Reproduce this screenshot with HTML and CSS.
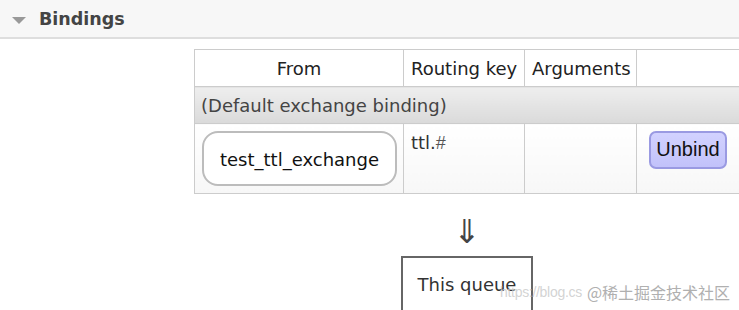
FILE: index.html
```html
<!DOCTYPE html>
<html>
<head>
<meta charset="utf-8">
<link rel="stylesheet" href="styles.css">
</head>
<body>
<div class="section-head">
  <span class="tri"></span>
  <h2 class="title">Bindings</h2>
</div>
<div class="content">
  <table class="bindings">
    <thead>
      <tr>
        <th class="c-from">From</th>
        <th class="c-key">Routing key</th>
        <th class="c-args">Arguments</th>
        <th class="c-act"></th>
      </tr>
    </thead>
    <tbody>
      <tr class="default-row">
        <td colspan="4">(Default exchange binding)</td>
      </tr>
      <tr class="data-row">
        <td class="c-from"><span class="pill">test_ttl_exchange</span></td>
        <td class="c-key">ttl.<span class="hash">#</span></td>
        <td class="c-args"></td>
        <td class="c-act"><button class="unbind">Unbind</button></td>
      </tr>
    </tbody>
  </table>
  <div class="flow">
    <div class="arrow">⇓</div>
    <div class="queue-box">This queue</div>
  </div>
</div>
<div class="watermark"><span class="wm-url">https://blog.cs</span><span class="wm-brand">@稀土掘金技术社区</span></div>
</body>
</html>
```
FILE: styles.css
```css
html, body {
  margin: 0;
  padding: 0;
  background: #fff;
  width: 739px;
  height: 310px;
  overflow: hidden;
  font-family: "DejaVu Sans", Verdana, sans-serif;
  color: #444;
}
body { position: relative; }

.section-head {
  display: flex;
  align-items: center;
  height: 37px;
  background: #f7f7f7;
  border-bottom: 2px solid #dedede;
  padding-left: 12px;
  gap: 13px;
}
.tri {
  width: 0;
  height: 0;
  border-left: 7px solid transparent;
  border-right: 7px solid transparent;
  border-top: 7px solid #999;
  margin-top: 3px;
}
.title {
  margin: 0;
  font-size: 17.5px;
  font-weight: bold;
  color: #444;
}

.content {
  padding-top: 10px;
  padding-left: 194px;
}

.bindings {
  border-collapse: collapse;
  table-layout: fixed;
  width: 600px;
  font-size: 18px;
  color: #222;
}
.bindings th, .bindings td {
  box-sizing: border-box;
  border: 1px solid #ccc;
  padding: 0;
}
.bindings th {
  font-weight: normal;
  height: 37px;
  text-align: center;
  color: #222;
}
.c-from { width: 209px; }
.c-key { width: 121px; }
.c-args { width: 112px; }

.bindings th.c-key, .bindings th.c-args { text-align: left; padding-left: 7px; }

.default-row td {
  height: 37px;
  background: linear-gradient(#eeeeee, #dadada);
  color: #444;
  padding-left: 6px;
}

.data-row { height: 70px; }
.data-row td {
  vertical-align: top;
  background: linear-gradient(#ffffff, #f7f7f7);
}
.data-row td.c-from { padding: 7px 0 0 7px; }
.pill {
  display: flex;
  align-items: center;
  justify-content: center;
  box-sizing: border-box;
  width: 195px;
  height: 55px;
  border: 2px solid #bcbcbc;
  border-radius: 16px;
  background: #fff;
  color: #111;
  padding-top: 2px;
}
.data-row td.c-key {
  padding: 8px 0 0 7px;
  color: #333;
}
.hash {
  font-family: "Liberation Sans", Arial, sans-serif;
  color: #555;
}
.data-row td.c-act { padding: 7px 0 0 12px; }
.unbind {
  box-sizing: border-box;
  width: 78px;
  height: 38px;
  border: 2px solid #9a9ae2;
  border-radius: 7px;
  background: linear-gradient(#d2d2ff, #c2c2fa);
  font-family: "Liberation Sans", Arial, sans-serif;
  font-size: 20px;
  color: #111;
  padding: 0 0 2px 0;
}

.flow {
  display: flex;
  flex-direction: column;
  align-items: center;
  width: 132px;
  margin-left: 207px;
  margin-top: 18px;
}
.arrow {
  font-size: 33px;
  line-height: 40px;
  color: #444;
}
.queue-box {
  box-sizing: border-box;
  width: 132px;
  height: 56px;
  margin-top: 4px;
  border: 2px solid #666;
  display: flex;
  align-items: center;
  justify-content: center;
  font-size: 18px;
  color: #333;
  padding-top: 1px;
}

.watermark {
  position: absolute;
  left: 500px;
  top: 280px;
  white-space: nowrap;
  display: flex;
  align-items: center;
  gap: 5px;
}
.wm-url {
  font-family: "Liberation Sans", sans-serif;
  color: rgba(200, 200, 200, 0.8);
  font-size: 14px;
  letter-spacing: -0.3px;
}
.wm-brand {
  color: #b0b0b0;
  font-size: 16px;
  font-family: "Noto Sans CJK SC", sans-serif;
  text-shadow: 0 0 2px #fff, 0 0 3px #fff;
}
```
